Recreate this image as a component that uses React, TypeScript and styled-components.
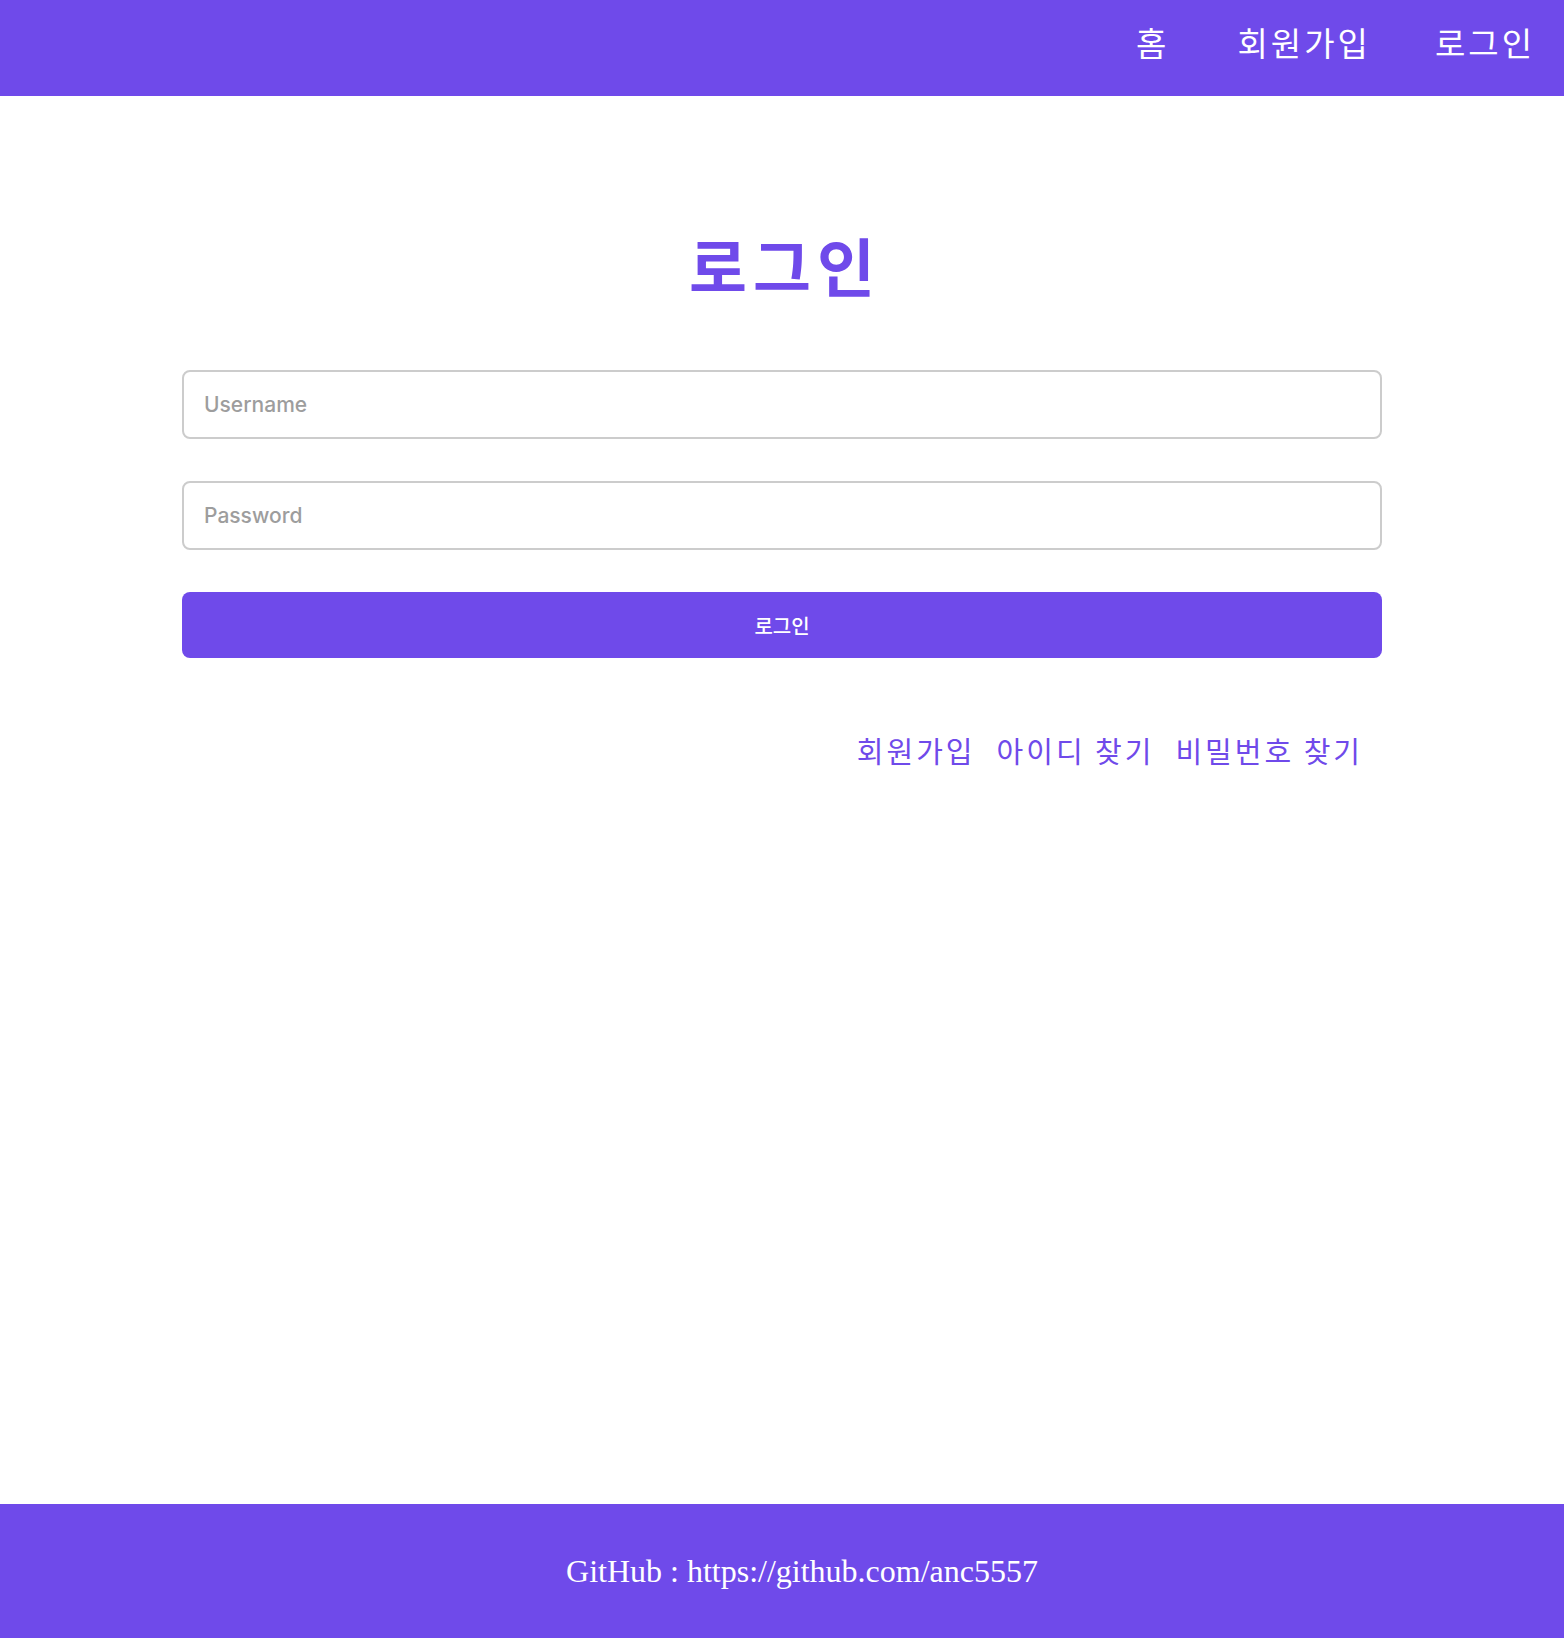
import React from 'react';
import styled, {createGlobalStyle} from "styled-components";

const PURPLE = '#6f4aea';

const GlobalStyle = createGlobalStyle`
  html, body {
    margin: 0;
    padding: 0;
    background: #ffffff;
  }
  * {
    box-sizing: border-box;
  }
`

export default function App() {
    return (
        <Page>
            <GlobalStyle/>
            <Header>
                <Nav>
                    <NavLink>홈</NavLink>
                    <NavLink>회원가입</NavLink>
                    <NavLink>로그인</NavLink>
                </Nav>
            </Header>
            <Main>
                <Title>로그인</Title>
                <Form onSubmit={e => e.preventDefault()}>
                    <Input type="text" placeholder="Username"/>
                    <Input type="password" placeholder="Password"/>
                    <SubmitButton type="submit">로그인</SubmitButton>
                </Form>
                <Links>
                    <TextLink>회원가입</TextLink>
                    <TextLink>아이디 찾기</TextLink>
                    <TextLink>비밀번호 찾기</TextLink>
                </Links>
            </Main>
            <Footer>GitHub : https://github.com/anc5557</Footer>
        </Page>
    );
}

const Page = styled.div`
  min-height: 100vh;
  display: flex;
  flex-direction: column;
`

const Header = styled.header`
  height: 96px;
  background-color: ${PURPLE};
  display: flex;
  justify-content: flex-end;
  align-items: center;
  padding: 0 29px 12px 0;
`

const Nav = styled.nav`
  display: flex;
  gap: 64px;
`

// серифного корейского шрифта нет, поэтому добираем ширину через letter-spacing
const NavLink = styled.a`
  color: #ffffff;
  font-family: "Noto Sans CJK KR", serif;
  font-size: 33px;
  letter-spacing: 3px;
  cursor: pointer;

  &:first-child {
    margin-right: 4px;
  }
`

const Main = styled.main`
  flex: 1;
  display: flex;
  flex-direction: column;
  align-items: center;
  padding-top: 126px;
`

const Title = styled.h1`
  margin: 0 0 64px;
  padding-left: 6px;
  color: ${PURPLE};
  font-family: "Noto Sans CJK KR", serif;
  font-size: 63px;
  font-weight: 700;
  letter-spacing: 6px;
  line-height: 84px;
`

const Form = styled.form`
  width: 1200px;
  display: flex;
  flex-direction: column;
  gap: 42px;
`

const Input = styled.input`
  height: 69px;
  padding: 0 20px;
  border: 2px solid #cccccc;
  border-radius: 8px;
  font-family: Inter, "Noto Sans CJK KR", sans-serif;
  font-size: 21px;
  font-weight: 500;
  color: #333;
  outline: none;

  &::placeholder {
    color: #9d9d9d;
  }
`

const SubmitButton = styled.button`
  height: 66px;
  border: none;
  border-radius: 8px;
  background-color: ${PURPLE};
  color: #ffffff;
  font-family: "Noto Sans CJK KR", sans-serif;
  font-size: 20px;
  font-weight: 500;
  cursor: pointer;
`

const Links = styled.div`
  width: 1200px;
  display: flex;
  justify-content: flex-end;
  gap: 21px;
  padding: 0 19px 0 0;
  margin-top: 71px;
`

const TextLink = styled.a`
  color: ${PURPLE};
  font-family: "Noto Sans CJK KR", serif;
  font-size: 29px;
  letter-spacing: 3px;
  cursor: pointer;
`

const Footer = styled.footer`
  height: 134px;
  padding-left: 40px;
  background-color: ${PURPLE};
  display: flex;
  justify-content: center;
  align-items: center;
  color: #ffffff;
  font-family: "Liberation Serif", serif;
  font-size: 32px;
`
